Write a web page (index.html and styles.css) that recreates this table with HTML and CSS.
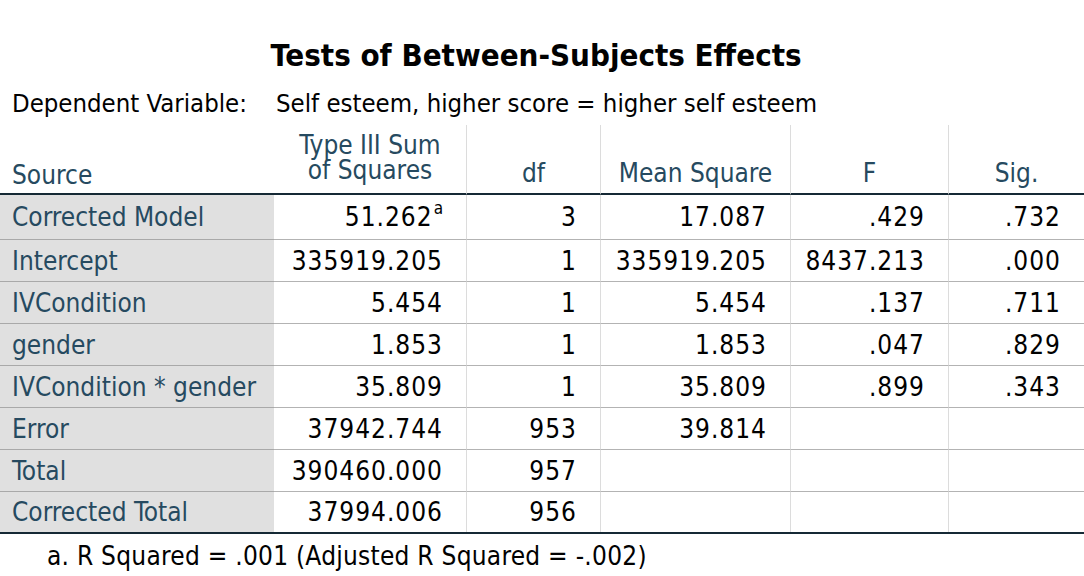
FILE: index.html
```html
<!DOCTYPE html>
<html lang="en">
<head>
<meta charset="utf-8">
<title>Tests of Between-Subjects Effects</title>
<link rel="stylesheet" href="styles.css">
</head>
<body>
<div class="page">
  <h1 class="title">Tests of Between-Subjects Effects</h1>
  <div class="depvar">
    <span class="dep-label">Dependent Variable:</span>
    <span class="dep-value">Self esteem, higher score = higher self esteem</span>
  </div>
  <div class="table">
    <div class="row head">
      <div class="cell h src">Source</div>
      <div class="cell h two"><span class="hl">Type III Sum</span><span class="hl">of Squares</span></div>
      <div class="cell h sep">df</div>
      <div class="cell h sep">Mean Square</div>
      <div class="cell h sep">F</div>
      <div class="cell h sep">Sig.</div>
    </div>
    <div class="row first">
      <div class="cell lab">Corrected Model</div>
      <div class="cell num">51.262<sup>a</sup></div>
      <div class="cell num sep">3</div>
      <div class="cell num sep">17.087</div>
      <div class="cell num sep">.429</div>
      <div class="cell num sep">.732</div>
    </div>
    <div class="row">
      <div class="cell lab">Intercept</div>
      <div class="cell num">335919.205</div>
      <div class="cell num sep">1</div>
      <div class="cell num sep">335919.205</div>
      <div class="cell num sep">8437.213</div>
      <div class="cell num sep">.000</div>
    </div>
    <div class="row">
      <div class="cell lab">IVCondition</div>
      <div class="cell num">5.454</div>
      <div class="cell num sep">1</div>
      <div class="cell num sep">5.454</div>
      <div class="cell num sep">.137</div>
      <div class="cell num sep">.711</div>
    </div>
    <div class="row">
      <div class="cell lab">gender</div>
      <div class="cell num">1.853</div>
      <div class="cell num sep">1</div>
      <div class="cell num sep">1.853</div>
      <div class="cell num sep">.047</div>
      <div class="cell num sep">.829</div>
    </div>
    <div class="row">
      <div class="cell lab">IVCondition * gender</div>
      <div class="cell num">35.809</div>
      <div class="cell num sep">1</div>
      <div class="cell num sep">35.809</div>
      <div class="cell num sep">.899</div>
      <div class="cell num sep">.343</div>
    </div>
    <div class="row">
      <div class="cell lab">Error</div>
      <div class="cell num">37942.744</div>
      <div class="cell num sep">953</div>
      <div class="cell num sep">39.814</div>
      <div class="cell num sep"></div>
      <div class="cell num sep"></div>
    </div>
    <div class="row">
      <div class="cell lab">Total</div>
      <div class="cell num">390460.000</div>
      <div class="cell num sep">957</div>
      <div class="cell num sep"></div>
      <div class="cell num sep"></div>
      <div class="cell num sep"></div>
    </div>
    <div class="row last">
      <div class="cell lab">Corrected Total</div>
      <div class="cell num">37994.006</div>
      <div class="cell num sep">956</div>
      <div class="cell num sep"></div>
      <div class="cell num sep"></div>
      <div class="cell num sep"></div>
    </div>
  </div>
  <div class="footnote">a. R Squared = .001 (Adjusted R Squared = -.002)</div>
</div>
</body>
</html>
```

FILE: styles.css
```css
html, body {
  margin: 0;
  padding: 0;
  background: #ffffff;
}

.page {
  width: 1084px;
  font-family: "DejaVu Sans Condensed", "DejaVu Sans", sans-serif;
  font-stretch: condensed;
  font-size: 26px;
  color: #010101;
}

.title {
  margin: 37px 0 0 0;
  padding-right: 12px;
  height: 36px;
  line-height: 36px;
  font-size: 31px;
  font-weight: bold;
  text-align: center;
  color: #010101;
}

.depvar {
  margin-top: 14px;
  height: 32px;
  line-height: 32px;
  display: grid;
  grid-template-columns: 274px 1fr;
  font-size: 25.5px;
}

.dep-label {
  padding-left: 12px;
}

.dep-value {
  padding-left: 2px;
}

.table {
  margin-top: 6px;
  border-bottom: 2px solid #152935;
}

.row {
  display: grid;
  grid-template-columns: 274px 192px 134px 190px 158px 136px;
  height: 42px;
}

.cell {
  box-sizing: border-box;
  border-bottom: 1px solid #b3b3b3;
  display: flex;
  align-items: center;
  white-space: nowrap;
}

.row.head {
  height: 70px;
}

.row.head .cell {
  border-bottom: 2px solid #152935;
  color: #264a60;
  align-items: flex-end;
  justify-content: center;
  text-align: center;
  line-height: 26px;
  padding-bottom: 7px;
}

.row.head .cell.two {
  flex-direction: column;
  align-items: center;
  justify-content: flex-end;
  padding-bottom: 10px;
}

.hl {
  display: block;
  height: 25px;
  line-height: 25px;
}

.row.head .cell.src {
  justify-content: flex-start;
  text-align: left;
  padding-left: 12px;
  padding-bottom: 5px;
}

.row.first {
  height: 45px;
}

.row.last {
  height: 40px;
}

.row.last .cell {
  border-bottom: none;
}

.sep {
  border-left: 1px solid #dcdcdc;
}

.lab {
  background: #e0e0e0;
  color: #264a60;
  padding-left: 12px;
  border-bottom-color: #a9a9a9;
}

.num {
  justify-content: flex-end;
  padding-right: 23px;
  letter-spacing: 1px;
}

.num sup {
  font-size: 17px;
  line-height: 0;
  position: relative;
  top: -9px;
  vertical-align: baseline;
  margin-left: 1px;
  letter-spacing: 0;
}

.footnote {
  margin-top: 6px;
  height: 32px;
  line-height: 32px;
  padding-left: 47px;
  letter-spacing: 0.25px;
}
```
